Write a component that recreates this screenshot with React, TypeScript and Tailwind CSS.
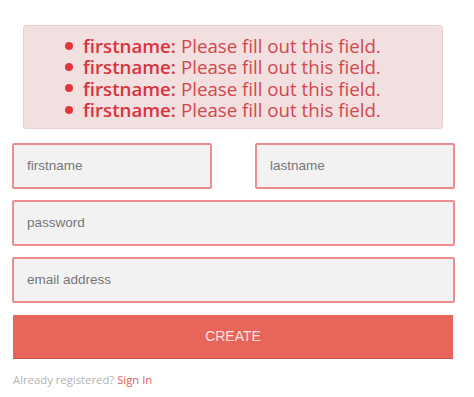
import React from "react";

export default function App() {
  const items = [0, 1, 2, 3];
  return (
    <div className="w-[474px] h-[397px] bg-white relative" style={{ fontFamily: "Arial, 'Liberation Sans', sans-serif" }}>
      <div className="pt-[25px] pl-[23px]">
        <div className="w-[420px] h-[104px] bg-[#f2dfe0] border border-[#ead0d3] rounded-[3px] pt-[9px]">
          <ul className="pl-[59px] list-none text-[18.7px] leading-[21.3px] text-[#d9434a]" style={{ fontFamily: "'Open Sans', sans-serif" }}>
            {items.map((i) => (
              <li key={i} className="flex items-center h-[21.3px]">
                <span className="w-[8px] h-[8px] rounded-full bg-[#e0373d] mr-[10px] ml-[-18px] shrink-0"></span>
                <span className="font-semibold text-[#d8343c]">firstname:</span>
                <span className="ml-[5px] text-[#d2474d]">Please fill out this field.</span>
              </li>
            ))}
          </ul>
        </div>
      </div>
      <div className="pl-[12px] w-[455px] mt-[14px] flex flex-col">
        <div className="flex justify-between">
          <div className="w-[200px] h-[46px] border-2 border-[#ec8e8f] rounded-[2px] bg-[#f2f2f2] flex items-center pl-[13px] text-[13.5px] text-[#767676]">firstname</div>
          <div className="w-[200px] h-[46px] border-2 border-[#ec8e8f] rounded-[2px] bg-[#f2f2f2] flex items-center pl-[13px] text-[13.5px] text-[#767676]">lastname</div>
        </div>
        <div className="mt-[11px] h-[46px] border-2 border-[#ec8e8f] rounded-[2px] bg-[#f2f2f2] flex items-center pl-[13px] text-[13.5px] text-[#767676]">password</div>
        <div className="mt-[11px] h-[46px] border-2 border-[#ec8e8f] rounded-[2px] bg-[#f2f2f2] flex items-center pl-[13px] text-[13.5px] text-[#767676]">email address</div>
        <div className="mt-[12px] ml-[1px] w-[440px] h-[44px] bg-[#e8655a] border-b border-[#c9574d] flex items-center justify-center text-[14px] text-[#fbe3e0]">CREATE</div>
        <div className="mt-[13px] ml-[1px] text-[11.3px] text-[#b3b3b3]" style={{ fontFamily: "'Open Sans', sans-serif" }}>
          Already registered? <span className="text-[#e0625a]">Sign In</span>
        </div>
      </div>
    </div>
  );
}
